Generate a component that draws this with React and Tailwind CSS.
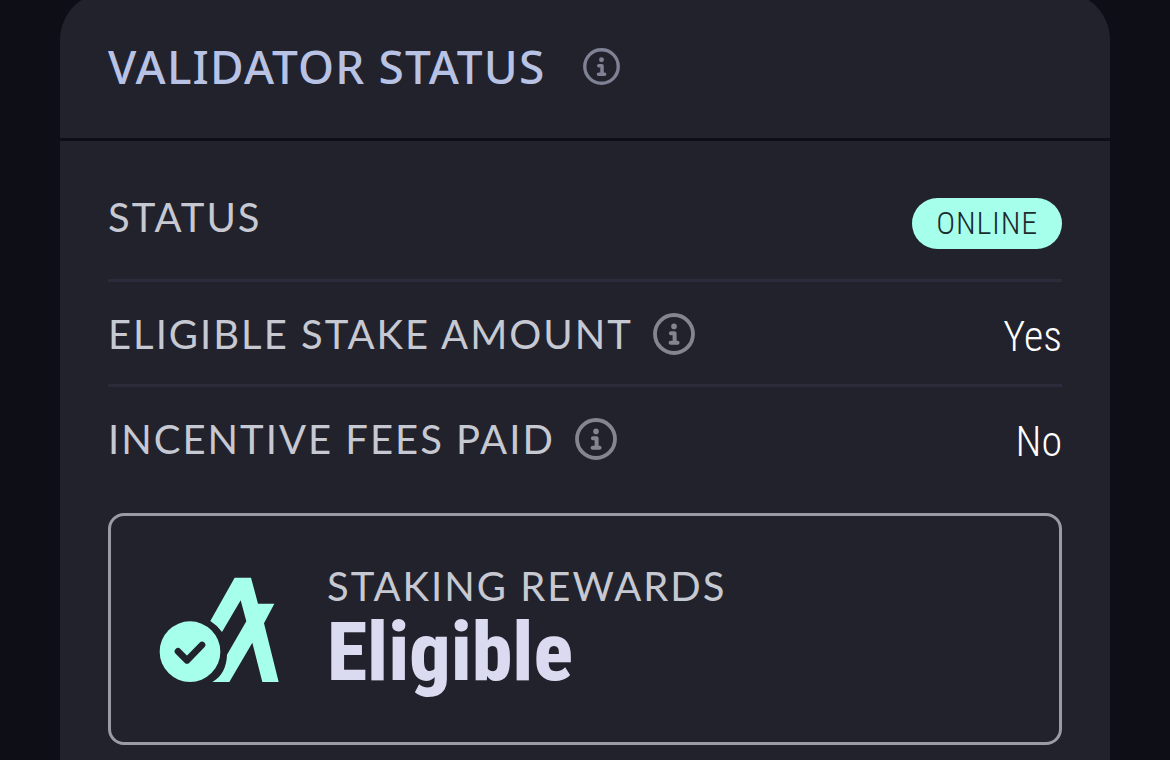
import React from 'react';

const rows = [
  { label: 'Eligible Stake Amount', value: 'Yes' },
  { label: 'Incentive Fees Paid', value: 'No' },
];

const labelClass = "font-[Lato,sans-serif] font-normal text-[40px] tracking-wider uppercase text-[#c6c8d2]";
const narrow = "font-['Roboto_Condensed',Roboto,sans-serif]";

function InfoIcon({ className }) {
  return (
    <svg viewBox="0 0 42 42" fill="none" stroke="currentColor" className={className} aria-hidden="true">
      <circle cx="21" cy="21" r="19" strokeWidth="3.8" />
      <circle cx="21" cy="13.4" r="2.8" fill="currentColor" stroke="none" />
      <path d="M17.9 20.2h3.7v9.5M17.6 29.7h7" strokeWidth="4" strokeLinecap="round" strokeLinejoin="round" />
    </svg>
  );
}

function RewardsLogo() {
  return (
    <svg viewBox="57 51 360 318" className="w-[120px] h-[106px] shrink-0 text-[#a6ffea]" fill="currentColor" aria-hidden="true">
      <path d="M284 53H333L354 131H403L372 190L416 366H367L337 248L268 366H217C246 350 260 320 261 284L319 184L302 121L246 216Q232 196 211 183Z" />
      <circle cx="150" cy="275" r="91" />
      <path d="M114 274L141 301L186 255" fill="none" stroke="#22222c" strokeWidth="20" strokeLinecap="round" strokeLinejoin="round" />
    </svg>
  );
}

export default function App() {
  return (
    <div className="flow-root min-h-screen overflow-hidden bg-[#0e0e17] px-[60px]">
      <section className="-mt-2 min-h-[calc(100vh+8px)] rounded-t-[48px] bg-[#22222c]">
        <header className="flex items-center gap-[38px] border-b-[3px] border-[#0e0e17] px-12 pt-[49px] pb-[47px]">
          <h1 className="font-['Noto_Sans',sans-serif] text-[46px] leading-[50px] font-medium tracking-wide uppercase text-[#b8c2e4]">
            Validator Status
          </h1>
          <button type="button" aria-label="About validator status" className="text-[#7f8195]">
            <InfoIcon className="size-[37px]" />
          </button>
        </header>

        <div className="px-12 pt-6 pb-4">
          <dl>
            <div className="flex items-start justify-between border-b-[3px] border-[#2b2b3b] pt-7 pb-5">
              <dt className={`${labelClass} leading-[48px]`}>Status</dt>
              <dd className="pt-[5px] pb-[10px]">
                <span className={`${narrow} block rounded-full bg-[#a6ffea] px-6 text-[32px] leading-[51px] font-[350] tracking-wide text-[#1c2b30]`}>
                  ONLINE
                </span>
              </dd>
            </div>

            {rows.map((row) => (
              <div
                key={row.label}
                className="flex items-start justify-between border-b-[3px] border-[#2b2b3b] pt-7 pb-5 last:border-b-0"
              >
                <dt className={`${labelClass} flex items-center gap-5 leading-[48px]`}>
                  {row.label}
                  <button type="button" aria-label={`About ${row.label}`} className="text-[#85858f]">
                    <InfoIcon className="size-[42px]" />
                  </button>
                </dt>
                <dd className={`${narrow} text-[42px] leading-[54px] font-[350] text-white`}>{row.value}</dd>
              </div>
            ))}
          </dl>

          <div className="mt-6 flex items-center gap-12 rounded-2xl border-[3px] border-[#9a9ba7] px-12 pt-12 pb-[46px]">
            <RewardsLogo />
            <div>
              <p className={`${labelClass} leading-[44px]`}>Staking Rewards</p>
              <p className={`${narrow} text-[82px] leading-[88px] font-extrabold text-[#dadbf1]`}>Eligible</p>
            </div>
          </div>
        </div>
      </section>
    </div>
  );
}
